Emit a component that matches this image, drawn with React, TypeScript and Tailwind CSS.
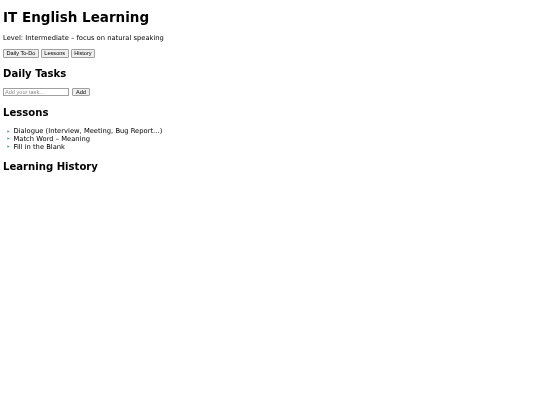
import React, { useState } from "react";

const lessons = ["Dialogue (Interview, Meeting, Bug Report…)", "Match Word – Meaning", "Fill in the Blank"];

const btn =
  "rounded-[1px] border border-[#a0a0a0] bg-[#efefef] px-[2.5px] leading-none text-black";

function Marker() {
  return (
    <span className="flex w-[10.5px] shrink-0 pl-[3.5px] pt-[1.2px]">
      <svg width="3" height="3" viewBox="0 0 3 3">
        <path d="M0.3 0.2 L2.8 1.5 L0.3 2.8 Z" fill="#4a8fd6" />
      </svg>
    </span>
  );
}

export default function App() {
  const [tasks, setTasks] = useState<string[]>([]);
  const [draft, setDraft] = useState("");

  return (
    <div className="m-[3.4px] font-['DejaVu_Sans',sans-serif] text-[6.75px] leading-[1.165] text-black will-change-transform">
      <h1 className="mt-[9.5px] mb-[8.9px] text-[13.5px] font-bold">IT English Learning</h1>
      <p className="mt-0 mb-[6.9px]">Level: Intermediate – focus on natural speaking</p>
      <div className="flex gap-[2px] font-['Liberation_Sans',Arial,sans-serif] text-[5.6px]">
        <button className={btn + " h-[9px]"}>Daily To-Do</button>
        <button className={btn + " h-[9px]"}>Lessons</button>
        <button className={btn + " h-[9px]"}>History</button>
      </div>

      <h2 className="mt-[10px] mb-[8.2px] text-[10.1px] font-bold">Daily Tasks</h2>
      <div className="flex items-center gap-[2.5px] font-['Liberation_Sans',Arial,sans-serif] text-[5.6px]">
        <input
          value={draft}
          onChange={(e) => setDraft(e.target.value)}
          placeholder="Add your task..."
          className="h-[8px] w-[66px] border border-[#a0a0a0] px-[1px] placeholder:text-[#8a8a8a]"
        />
        <button
          onClick={() => {
            if (draft.trim()) setTasks([...tasks, draft.trim()]);
            setDraft("");
          }}
          className={btn + " h-[8px] px-[3.5px]"}
        >
          Add
        </button>
      </div>
      {tasks.length > 0 && (
        <ul className="mt-[4px]">
          {tasks.map((t, i) => (
            <li key={i}>{t}</li>
          ))}
        </ul>
      )}

      <h2 className="mt-[10.6px] text-[10.1px] font-bold">Lessons</h2>
      <ul className="mt-[9.8px]">
        {lessons.map((l) => (
          <li key={l} className="flex">
            <Marker />
            <span>{l}</span>
          </li>
        ))}
      </ul>

      <h2 className="mt-[9px] text-[10.1px] font-bold">Learning History</h2>
    </div>
  );
}
